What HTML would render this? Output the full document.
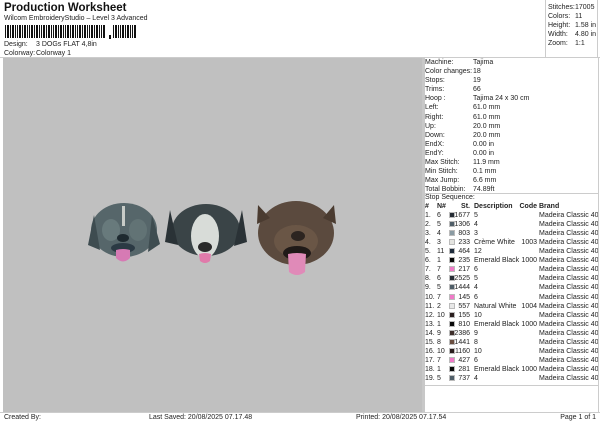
<!DOCTYPE html>
<html><head><meta charset="utf-8"><style>
*{margin:0;padding:0;box-sizing:border-box}
body{width:600px;height:424px;background:#fff;font-family:"Liberation Sans",sans-serif;font-size:7px;color:#222;position:relative;overflow:hidden}
.a{position:absolute;white-space:nowrap}
.canvas{position:absolute;left:3px;top:58px;width:421px;height:354px;background:#c0c0c0}
.row{position:absolute;left:425px;height:9px;line-height:9px}
.sw{position:absolute;width:6px;height:6px;top:1px;left:24px}
</style></head><body>
<div class="a" style="left:4px;top:2px;font-size:11.5px;font-weight:bold;color:#111">Production Worksheet</div>
<div class="a" style="left:4px;top:15px">Wilcom EmbroideryStudio – Level 3 Advanced</div>
<svg class="a" style="left:5px;top:25px" width="132" height="15">
<g fill="#111">
<rect x="0" y="0" width="1" height="13"/><rect x="2" y="0" width="2" height="13"/><rect x="5" y="0" width="1" height="13"/><rect x="7" y="0" width="2" height="13"/><rect x="10" y="0" width="1" height="13"/><rect x="12" y="0" width="1" height="13"/><rect x="14" y="0" width="2" height="13"/><rect x="17" y="0" width="1" height="13"/><rect x="19" y="0" width="2" height="13"/><rect x="22" y="0" width="1" height="13"/><rect x="24" y="0" width="1" height="13"/><rect x="26" y="0" width="2" height="13"/><rect x="29" y="0" width="1" height="13"/><rect x="31" y="0" width="2" height="13"/><rect x="34" y="0" width="1" height="13"/><rect x="36" y="0" width="1" height="13"/><rect x="38" y="0" width="2" height="13"/><rect x="41" y="0" width="1" height="13"/><rect x="43" y="0" width="2" height="13"/><rect x="46" y="0" width="1" height="13"/><rect x="48" y="0" width="1" height="13"/><rect x="50" y="0" width="2" height="13"/><rect x="53" y="0" width="1" height="13"/><rect x="55" y="0" width="2" height="13"/><rect x="58" y="0" width="1" height="13"/><rect x="60" y="0" width="1" height="13"/><rect x="62" y="0" width="2" height="13"/><rect x="65" y="0" width="1" height="13"/><rect x="67" y="0" width="2" height="13"/><rect x="70" y="0" width="1" height="13"/><rect x="72" y="0" width="1" height="13"/><rect x="74" y="0" width="2" height="13"/><rect x="77" y="0" width="1" height="13"/><rect x="79" y="0" width="2" height="13"/><rect x="82" y="0" width="1" height="13"/><rect x="84" y="0" width="1" height="13"/><rect x="86" y="0" width="2" height="13"/><rect x="89" y="0" width="1" height="13"/><rect x="91" y="0" width="2" height="13"/><rect x="94" y="0" width="1" height="13"/><rect x="96" y="0" width="1" height="13"/><rect x="98" y="0" width="2" height="13"/>
<rect x="104" y="10" width="2" height="4"/>
<rect x="108" y="0" width="1" height="13"/><rect x="110" y="0" width="2" height="13"/><rect x="113" y="0" width="1" height="13"/><rect x="115" y="0" width="1" height="13"/><rect x="117" y="0" width="2" height="13"/><rect x="120" y="0" width="1" height="13"/><rect x="122" y="0" width="2" height="13"/><rect x="125" y="0" width="1" height="13"/><rect x="127" y="0" width="1" height="13"/><rect x="129" y="0" width="2" height="13"/>
</g></svg>
<div class="a" style="left:4px;top:41px">Design:</div><div class="a" style="left:36px;top:41px">3 DOGs FLAT 4,8in</div>
<div class="a" style="left:4px;top:50px">Colorway:</div><div class="a" style="left:36px;top:50px">Colorway 1</div>
<div class="a" style="left:0;top:57px;width:600px;border-top:1px solid #ccc"></div>

<div class="a" style="left:545px;top:0;width:53px;height:58px;border-left:1px solid #ccc;border-right:1px solid #ccc"></div>
<div class="a" style="left:548px;top:3px;line-height:9px">Stitches:<br>Colors:<br>Height:<br>Width:<br>Zoom:</div>
<div class="a" style="left:575px;top:3px;line-height:9px">17005<br>11<br>1.58 in<br>4.80 in<br>1:1</div>

<div class="canvas">
<svg width="421" height="354" style="position:absolute;left:0;top:0">
<g transform="translate(-3,-58)">
<!-- dog 1 -->
<ellipse cx="124" cy="230" rx="33" ry="27" fill="#56666a"/>
<path d="M94 215 L88 245 L100 250Z M152 215 L160 244 L148 252Z" fill="#3e4c50"/>
<ellipse cx="111" cy="230" rx="9" ry="11" fill="#687a7c"/>
<ellipse cx="138" cy="230" rx="9" ry="11" fill="#627375"/>
<rect x="122" y="206" width="3" height="20" fill="#c8ccc8"/>
<ellipse cx="123" cy="238" rx="6" ry="4" fill="#1e2a30"/>
<ellipse cx="123" cy="248" rx="12" ry="5" fill="#2b3a44"/>
<path d="M116 250 Q123 248 130 250 L130 258 Q123 265 116 258Z" fill="#d67ab4"/>
<!-- dog 2 -->
<ellipse cx="206" cy="230" rx="34" ry="26" fill="#3a4447"/>
<path d="M170 210 L165 242 L178 245Z M242 210 L247 242 L234 246Z" fill="#2a3236"/>
<ellipse cx="205" cy="236" rx="14" ry="22" fill="#d8dcd8"/>
<ellipse cx="205" cy="247" rx="7" ry="5" fill="#2a2a2a"/>
<path d="M199 254 Q205 252 211 254 L210 261 Q205 265 200 261Z" fill="#e07aaa"/>
<!-- dog 3 -->
<ellipse cx="296" cy="233" rx="38" ry="32" fill="#5b4a3e"/>
<path d="M258 205 L257 224 L270 218Z M334 205 L336 224 L323 218Z" fill="#4a3b30"/>
<ellipse cx="296" cy="241" rx="22" ry="16" fill="#6a5646"/>
<ellipse cx="298" cy="236" rx="7" ry="5" fill="#2c2420"/>
<ellipse cx="297" cy="253" rx="14" ry="7" fill="#201a18"/>
<path d="M288 254 Q297 252 306 254 L305 272 Q297 278 289 272Z" fill="#e08ab8"/>
</g></svg>
</div>

<div class="a" style="left:422px;top:58px;width:3px;height:354px;background:#c8c8c8"></div>
<div class="a" style="left:425px;top:58px;line-height:9.1px">Machine:<br>Color changes:<br>Stops:<br>Trims:<br>Hoop :<br>Left:<br>Right:<br>Up:<br>Down:<br>EndX:<br>EndY:<br>Max Stitch:<br>Min Stitch:<br>Max Jump:<br>Total Bobbin:</div>
<div class="a" style="left:473px;top:58px;line-height:9.1px">Tajima<br>18<br>19<br>66<br>Tajima 24 x 30 cm<br>61.0 mm<br>61.0 mm<br>20.0 mm<br>20.0 mm<br>0.00 in<br>0.00 in<br>11.9 mm<br>0.1 mm<br>6.6 mm<br>74.89ft</div>
<div class="a" style="left:425px;top:193px;width:173px;border-top:1px solid #ccc"></div>
<div class="a" style="left:425px;top:194px">Stop Sequence:</div>
<div class="row" style="top:202px;width:173px;font-weight:bold;text-decoration:underline">
<span class="a" style="left:0">#</span><span class="a" style="left:12px">N#</span><span class="a" style="right:128px">St.</span><span class="a" style="left:49px">Description</span><span class="a" style="right:61px">Code</span><span class="a" style="left:114px">Brand</span></div>
<div id="rows"></div>
<div class="a" style="left:425px;top:385px;width:173px;border-top:1px solid #ccc"></div>
<div class="a" style="left:598px;top:58px;height:354px;border-left:1px solid #ccc"></div>

<div class="a" style="left:0;top:412px;width:600px;border-top:1px solid #ccc"></div>
<div class="a" style="left:4px;top:414px">Created By:</div>
<div class="a" style="left:149px;top:414px">Last Saved: 20/08/2025 07.17.48</div>
<div class="a" style="left:356px;top:414px">Printed: 20/08/2025 07.17.54</div>
<div class="a" style="right:4px;top:414px">Page 1 of 1</div>

<script>
var d=[["1.","6","#262d35","1677","5",""],["2.","5","#4f5e68","1306","4",""],["3.","4","#8a9ba3","803","3",""],["4.","3","#e4e4e0","233","Crème White","1003"],["5.","11","#1e2c3c","464","12",""],["6.","1","#080808","235","Emerald Black","1000"],["7.","7","#f07ac8","217","6",""],["8.","6","#262d35","2525","5",""],["9.","5","#4f5e68","1444","4",""],["10.","7","#f07ac8","145","6",""],["11.","2","#e8e8e8","557","Natural White","1004"],["12.","10","#2a1e1e","155","10",""],["13.","1","#080808","810","Emerald Black","1000"],["14.","9","#3e2e2a","2386","9",""],["15.","8","#6a4e40","1441","8",""],["16.","10","#2a1e1e","1160","10",""],["17.","7","#f07ac8","427","6",""],["18.","1","#080808","281","Emerald Black","1000"],["19.","5","#4f5e68","737","4",""]];
var h="";d.forEach(function(r,i){var t=211+i*9.06;h+='<div class="row" style="top:'+t+'px;width:173px"><span class="a" style="left:0">'+r[0]+'</span><span class="a" style="left:12px">'+r[1]+'</span><span class="sw" style="background:'+r[2]+';border:1px solid #bbb"></span><span class="a" style="right:128px">'+r[3]+'</span><span class="a" style="left:49px">'+r[4]+'</span><span class="a" style="right:61px">'+r[5]+'</span><span class="a" style="left:114px">Madeira Classic 40</span></div>';});
document.getElementById("rows").outerHTML=h;
</script>
</body></html>
